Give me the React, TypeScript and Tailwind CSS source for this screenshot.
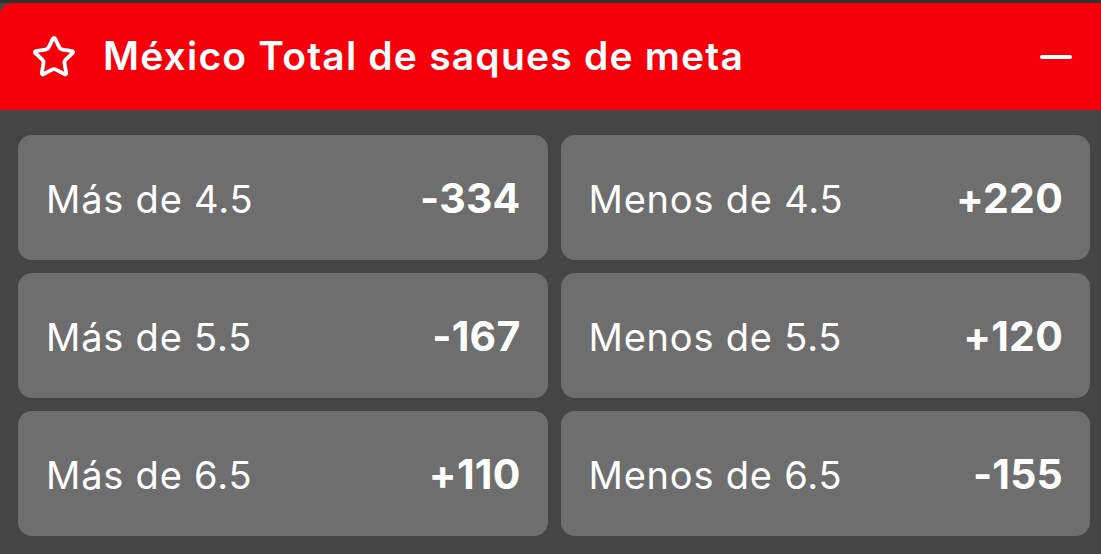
import { Star } from "lucide-react";

type Outcome = { label: string; odds: string };

const rows: [Outcome, Outcome][] = [
  [
    { label: "Más de 4.5", odds: "-334" },
    { label: "Menos de 4.5", odds: "+220" },
  ],
  [
    { label: "Más de 5.5", odds: "-167" },
    { label: "Menos de 5.5", odds: "+120" },
  ],
  [
    { label: "Más de 6.5", odds: "+110" },
    { label: "Menos de 6.5", odds: "-155" },
  ],
];

function OddsButton({ label, odds }: Outcome) {
  return (
    <button className="flex h-[125px] items-center justify-between rounded-[14px] bg-[#6e6e6e] pl-7 pr-[27px] pt-[3px] text-white">
      <span className="text-[38px] font-normal tracking-[0.8px]">{label}</span>
      <span className="text-[41px] font-bold tracking-[0.2px]">{odds}</span>
    </button>
  );
}

export default function App() {
  return (
    <div
      className="h-[554px] w-[1101px] overflow-hidden bg-[#333] pt-[3px]"
      style={{ fontFamily: "Inter, 'Noto Sans', sans-serif" }}
    >
      <div className="h-full bg-[#454545]">
        <div className="flex h-[107px] items-center rounded-tl-[12px] bg-[#f5000a] pl-[31px] pr-[29px] text-white">
          <Star size={46} strokeWidth={2} />
          <h2 className="ml-[26px] flex-1 text-[39px] font-semibold tracking-[1.2px]">
            México Total de saques de meta
          </h2>
          <span className="h-[4px] w-[32px] rounded-full bg-white" />
        </div>

        <div className="grid grid-cols-2 gap-[13px] pl-[18px] pr-[11px] pt-[25px]">
          {rows.map(([over, under]) => (
            <>
              <OddsButton key={over.label} {...over} />
              <OddsButton key={under.label} {...under} />
            </>
          ))}
        </div>
      </div>
    </div>
  );
}
